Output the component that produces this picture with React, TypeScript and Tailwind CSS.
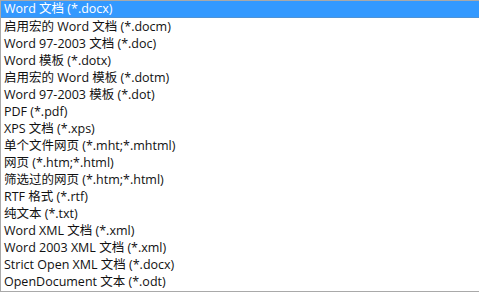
const ITEMS = [
  'Word 文档 (*.docx)',
  '启用宏的 Word 文档 (*.docm)',
  'Word 97-2003 文档 (*.doc)',
  'Word 模板 (*.dotx)',
  '启用宏的 Word 模板 (*.dotm)',
  'Word 97-2003 模板 (*.dot)',
  'PDF (*.pdf)',
  'XPS 文档 (*.xps)',
  '单个文件网页 (*.mht;*.mhtml)',
  '网页 (*.htm;*.html)',
  '筛选过的网页 (*.htm;*.html)',
  'RTF 格式 (*.rtf)',
  '纯文本 (*.txt)',
  'Word XML 文档 (*.xml)',
  'Word 2003 XML 文档 (*.xml)',
  'Strict Open XML 文档 (*.docx)',
  'OpenDocument 文本 (*.odt)',
];

export default function App() {
  return (
    <div className="w-[479px] h-[292px] bg-white overflow-hidden">
      <div
        className="w-[490px] h-[292px] border border-[#a9a9a9] bg-white"
        style={{ fontFamily: '"Open Sans", "Noto Sans CJK SC", sans-serif' }}
      >
        {ITEMS.map((label, i) => (
          <div
            key={label}
            className={`h-[17px] pl-[3px] text-[12.5px] whitespace-nowrap ${
              i === 0
                ? 'bg-[#3399ff] text-white border-b border-[#4f93d6] leading-[16px]'
                : 'text-[#111111] leading-[17px]'
            }`}
          >
            {label}
          </div>
        ))}
      </div>
    </div>
  );
}
